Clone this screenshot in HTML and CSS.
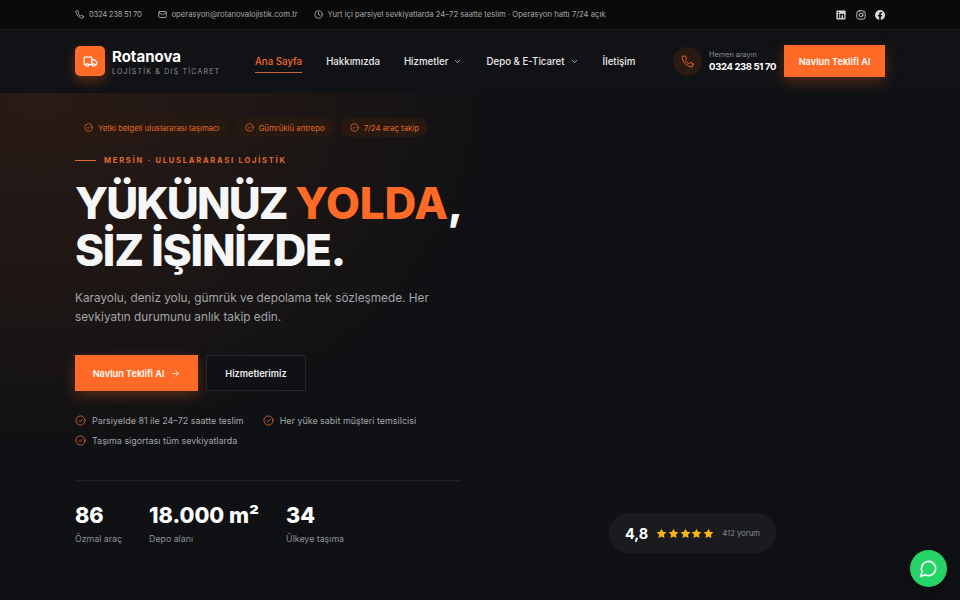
FILE: index.html
```html
<!DOCTYPE html>
<html lang="tr">
<head>
    <title>Rotanova Lojistik</title>
    <meta charset="utf-8" />
    <link rel="stylesheet" href="styles.css">
</head>
<body>
    <svg class="sprite" width="0" height="0">
        <symbol id="i-phone" viewBox="0 0 24 24"><path d="M22 16.900v3a2 2 0 0 1-2.200 2 19.800 19.800 0 0 1-8.600-3.100 19.500 19.500 0 0 1-6-6 19.800 19.800 0 0 1-3.100-8.700A2 2 0 0 1 4.100 2h3a2 2 0 0 1 2 1.700c.1 1 .4 1.900.7 2.800a2 2 0 0 1-.5 2.100L8.100 9.900a16 16 0 0 0 6 6l1.300-1.300a2 2 0 0 1 2.100-.4c.9.300 1.800.6 2.800.7a2 2 0 0 1 1.700 2z"/></symbol>
        <symbol id="i-check" viewBox="0 0 24 24"><circle cx="12" cy="12" r="10"/><path d="m8.500 12.200 2.500 2.500 4.800-5"/></symbol>
        <symbol id="i-down" viewBox="0 0 24 24"><path d="m6 9 6 6 6-6"/></symbol>
        <symbol id="i-star" viewBox="0 0 24 24"><path d="M12 1.500l3.200 6.900 7.500.9-5.500 5.200 1.400 7.500L12 18.300l-6.600 3.700 1.400-7.500L1.300 9.300l7.500-.9z"/></symbol>
    </svg>

    <div class="topbar">
        <div class="container topbar-in">
            <span class="top-item top-phone"><svg class="ic"><use href="#i-phone"/></svg>0324 238 51 70</span>
            <span class="top-item"><svg class="ic" viewBox="0 0 24 24"><rect x="2" y="4" width="20" height="16" rx="2"/><path d="m22 7-10 6L2 7"/></svg>operasyon@rotanovalojistik.com.tr</span>
            <span class="top-item"><svg class="ic" viewBox="0 0 24 24"><circle cx="12" cy="12" r="10"/><path d="M12 6v6l4 2"/></svg>Yurt içi parsiyel sevkiyatlarda 24–72 saatte teslim · Operasyon hattı 7/24 açık</span>
            <div class="socials">
                <svg class="soc" viewBox="0 0 24 24"><path class="solid" d="M3 1h18a2 2 0 0 1 2 2v18a2 2 0 0 1-2 2H3a2 2 0 0 1-2-2V3a2 2 0 0 1 2-2zm1.500 8v10.500h3.300V9zm1.650-5a1.900 1.900 0 1 0 0 3.800 1.900 1.900 0 0 0 0-3.800zM10 9v10.500h3.300v-5.400c0-1.500.6-2.400 1.800-2.400s1.600.9 1.600 2.400v5.400H20v-6.200c0-2.900-1.500-4.100-3.500-4.100-1.500 0-2.600.7-3.200 1.700V9z"/></svg>
                <svg class="soc soc-line" viewBox="0 0 24 24"><rect x="2" y="2" width="20" height="20" rx="5.500"/><circle cx="12" cy="12" r="4.500"/><circle class="dot" cx="17.600" cy="6.400" r="1.200"/></svg>
                <svg class="soc" viewBox="0 0 24 24"><path class="solid" d="M24 12a12 12 0 1 0-13.900 11.900v-8.400H7.100V12h3V9.400c0-3 1.800-4.700 4.500-4.700 1.300 0 2.700.2 2.700.2v3h-1.500c-1.500 0-2 .9-2 1.900V12h3.400l-.5 3.500h-2.800v8.400A12 12 0 0 0 24 12z"/></svg>
            </div>
        </div>
    </div>

    <header class="header">
        <div class="container header-in">
            <a class="brand">
                <span class="logo-box">
                    <svg viewBox="0 0 24 24"><path d="M14 17V6a1 1 0 0 0-1-1H3a1 1 0 0 0-1 1v10a1 1 0 0 0 1 1h2"/><path d="M14 9h4l4 4v3a1 1 0 0 1-1 1h-2"/><path d="M9 17h6"/><circle cx="7" cy="17.500" r="2"/><circle cx="17" cy="17.500" r="2"/></svg>
                </span>
                <span class="brand-text">
                    <span class="brand-name">Rotanova</span>
                    <span class="brand-sub">LOJİSTİK &amp; DIŞ TİCARET</span>
                </span>
            </a>
            <nav class="nav">
                <a class="nav-link active">Ana Sayfa</a>
                <a class="nav-link">Hakkımızda</a>
                <a class="nav-link">Hizmetler <svg class="chev"><use href="#i-down"/></svg></a>
                <a class="nav-link">Depo &amp; E-Ticaret <svg class="chev"><use href="#i-down"/></svg></a>
                <a class="nav-link">İletişim</a>
            </nav>
            <div class="header-call">
                <span class="call-ic"><svg><use href="#i-phone"/></svg></span>
                <span class="call-text">
                    <span class="call-lbl">Hemen arayın</span>
                    <span class="call-num">0324 238 51 70</span>
                </span>
            </div>
            <a class="btn btn-orange btn-head">Navlun Teklifi Al</a>
        </div>
    </header>

    <section class="hero">
        <div class="container hero-in">
            <div class="chips">
                <span class="chip"><svg><use href="#i-check"/></svg>Yetki belgeli uluslararası taşımacı</span>
                <span class="chip"><svg><use href="#i-check"/></svg>Gümrüklü antrepo</span>
                <span class="chip"><svg><use href="#i-check"/></svg>7/24 araç takip</span>
            </div>
            <div class="eyebrow"><span class="eyebrow-line"></span>MERSİN · ULUSLARARASI LOJİSTİK</div>
            <h1><span class="h1-first">YÜKÜNÜZ</span> <em>YOLDA</em>,<br>SİZ İŞİNİZDE.</h1>
            <p class="lead">Karayolu, deniz yolu, gümrük ve depolama tek sözleşmede. Her sevkiyatın durumunu anlık takip edin.</p>
            <div class="actions">
                <a class="btn btn-orange btn-big">Navlun Teklifi Al
                    <svg viewBox="0 0 24 24"><path d="M4 12h16M13 5l7 7-7 7"/></svg>
                </a>
                <a class="btn btn-ghost">Hizmetlerimiz</a>
            </div>
            <ul class="ticks">
                <li><svg><use href="#i-check"/></svg>Parsiyelde 81 ile 24–72 saatte teslim</li>
                <li><svg><use href="#i-check"/></svg>Her yüke sabit müşteri temsilcisi</li>
                <li><svg><use href="#i-check"/></svg>Taşıma sigortası tüm sevkiyatlarda</li>
            </ul>
            <div class="stats">
                <div class="stat"><b>86</b><span>Özmal araç</span></div>
                <div class="stat"><b>18.000 m²</b><span>Depo alanı</span></div>
                <div class="stat"><b>34</b><span>Ülkeye taşıma</span></div>
            </div>
        </div>
        <div class="rating">
            <b>4,8</b>
            <span class="stars">
                <svg><use href="#i-star"/></svg>
                <svg><use href="#i-star"/></svg>
                <svg><use href="#i-star"/></svg>
                <svg><use href="#i-star"/></svg>
                <svg><use href="#i-star"/></svg>
            </span>
            <span class="rating-txt">412 yorum</span>
        </div>
    </section>

    <a class="wa">
        <svg viewBox="0 0 24 24"><path d="M7.900 20A9 9 0 1 0 4 16.100L2 22z"/></svg>
    </a>
</body>
</html>
```

FILE: styles.css
```css
* { box-sizing: border-box; }
html, body { margin: 0; padding: 0; height: 600px; overflow: hidden; }
body { background: #101114; color: #fff; font-family: "Inter", "Noto Sans", sans-serif; }
a { color: inherit; text-decoration: none; }
svg { fill: none; stroke: currentColor; stroke-width: 2; stroke-linecap: round; stroke-linejoin: round; }
.sprite { position: absolute; }
.container { width: 810px; margin: 0 auto; }

/* top bar */
.topbar { height: 29px; background: #0a0a0b; color: #a3a5a8; font-size: 7.700px; }
.topbar-in { height: 29px; display: flex; align-items: center; gap: 16px; }
.top-item { display: flex; align-items: center; gap: 5px; white-space: nowrap; }
.top-phone { letter-spacing: -.3px; }
.ic { width: 9px; height: 9px; color: #c6c7c9; }
.socials { margin-left: auto; display: flex; align-items: center; gap: 9.500px; }
.soc { width: 10px; height: 10px; color: #dcdcdc; }
.soc .solid { fill: currentColor; stroke: none; }
.soc-line .dot { fill: currentColor; stroke: none; }

/* header */
.header { height: 64px; background: #111215; border-top: 1px solid #15171a; }
.header-in { height: 62px; display: flex; align-items: center; }
.brand { display: flex; align-items: center; gap: 7px; width: 180px; }
.logo-box { width: 30px; height: 30px; border-radius: 5px; background: #ff6b26; color: #fff; display: flex; align-items: center; justify-content: center; box-shadow: 0 5px 12px rgba(255, 107, 38, .3); }
.logo-box svg { width: 15px; height: 15px; }
.brand-text { display: flex; flex-direction: column; padding-top: 2px; }
.brand-name { font-size: 15px; font-weight: 700; line-height: 17px; }
.brand-sub { font-size: 7px; letter-spacing: 1.200px; color: #8e9094; line-height: 11px; margin-top: 1px; white-space: nowrap; }
.nav { display: flex; gap: 24px; font-size: 9.700px; font-weight: 500; color: #e9e9ea; }
.nav-link { display: flex; align-items: center; gap: 5px; height: 24px; padding-top: 1px; border-bottom: 1.500px solid transparent; white-space: nowrap; }
.nav-link.active { color: #f2692a; border-bottom-color: #c9623a; }
.chev { width: 9px; height: 9px; }
.header-call { margin-left: auto; display: flex; align-items: center; gap: 7px; }
.call-ic { width: 29px; height: 29px; border-radius: 50%; background: #2a1a14; color: #ff6b26; display: flex; align-items: center; justify-content: center; }
.call-ic svg { width: 13px; height: 13px; stroke-width: 1.700; }
.call-text { display: flex; flex-direction: column; }
.call-lbl { font-size: 7.300px; line-height: 10px; color: #8e9094; }
.call-num { font-size: 9.500px; line-height: 13px; font-weight: 700; letter-spacing: -.35px; white-space: nowrap; }
.btn { display: flex; align-items: center; justify-content: center; font-weight: 600; white-space: nowrap; }
.btn-orange { background: #ff6b26; color: #fff; box-shadow: 0 5px 14px rgba(255, 107, 38, .28); }
.btn-head { width: 101px; height: 32px; margin-left: 8px; font-size: 9.200px; }

/* hero */
.hero { position: relative; height: 507px; background: radial-gradient(460px 360px at 40px 0, rgba(255, 107, 38, .105), rgba(255, 107, 38, .05) 60%, rgba(255, 107, 38, 0) 100%), #101114; }
.hero-in { padding-top: 25px; }
.chips { display: flex; gap: 7px; }
.chip { display: flex; align-items: center; gap: 5px; height: 19px; padding: 0 9px; border-radius: 10px; background: #27190f; color: #e2682c; font-size: 7.800px; white-space: nowrap; }
.chip svg { width: 9px; height: 9px; }
.eyebrow { display: flex; align-items: center; gap: 8px; margin-top: 16px; height: 14px; color: #e2682c; font-size: 7.500px; font-weight: 700; letter-spacing: 1.800px; }
.eyebrow-line { width: 21px; height: 1px; background: #e2682c; }
h1 { margin: 13px 0 0; font-size: 44px; line-height: 47px; font-weight: 800; letter-spacing: -1.200px; color: #f6f6f6; }
.h1-first { letter-spacing: -1.900px; }
h1 em { font-style: normal; color: #ff6b26; letter-spacing: -.2px; }
.lead { width: 386px; margin: 15px 0 0; font-size: 11.800px; line-height: 19px; color: #a3a5a8; }
.actions { display: flex; gap: 8px; margin-top: 28px; }
.btn-big { width: 123px; height: 36px; gap: 7px; font-size: 9.200px; }
.btn-big svg { width: 9px; height: 9px; }
.btn-ghost { width: 100px; height: 36px; border: 1px solid #25272a; background: #101114; font-size: 9.200px; color: #ececec; }
.ticks { width: 386px; list-style: none; margin: 23px 0 0; padding: 0; display: flex; flex-wrap: wrap; gap: 8px 19px; font-size: 8.950px; color: #a3a5a8; }
.ticks li { display: flex; align-items: center; gap: 6px; height: 12px; white-space: nowrap; }
.ticks svg { width: 11px; height: 11px; color: #e2682c; stroke-width: 1.800; }
.stats { width: 386px; margin-top: 34px; padding-top: 21px; border-top: 1px solid #1f2124; display: flex; gap: 27px; }
.stat { display: flex; flex-direction: column; }
.stat b { font-size: 21.600px; line-height: 26px; font-weight: 800; white-space: nowrap; }
.stat span { margin-top: 2px; font-size: 8.800px; line-height: 18px; color: #8e9094; }

/* rating pill sits over the hero */
.rating { position: absolute; left: 609px; top: 420px; width: 167px; height: 40px; padding-left: 16px; border-radius: 20px; background: #191b1e; display: flex; align-items: center; }
.rating b { font-size: 14.500px; font-weight: 700; }
.stars { margin-left: 8px; color: #fdb515; display: flex; gap: .75px; }
.stars svg { width: 11px; height: 11px; fill: currentColor; stroke: none; }
.rating-txt { margin-left: 8px; font-size: 7.700px; color: #85878a; white-space: nowrap; }

/* whatsapp */
.wa { position: fixed; right: 13px; bottom: 13px; width: 37px; height: 37px; border-radius: 50%; background: #25d366; color: #fff; display: flex; align-items: center; justify-content: center; box-shadow: 0 5px 16px rgba(0, 0, 0, .35); }
.wa svg { width: 19px; height: 19px; }
```
